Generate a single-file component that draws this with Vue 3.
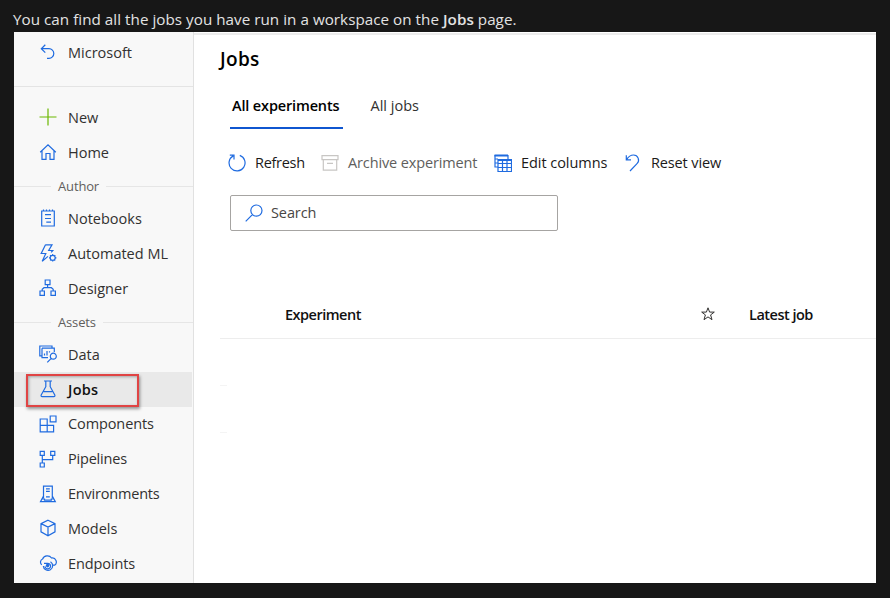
<script setup>
const main = [
  { label: 'New', icon: 'plus' },
  { label: 'Home', icon: 'home' },
]
const author = [
  { label: 'Notebooks', icon: 'notebook' },
  { label: 'Automated ML', icon: 'automl' },
  { label: 'Designer', icon: 'designer' },
]
const assets = [
  { label: 'Data', icon: 'data' },
  { label: 'Jobs', icon: 'flask', active: true },
  { label: 'Components', icon: 'components' },
  { label: 'Pipelines', icon: 'pipelines' },
  { label: 'Environments', icon: 'environments' },
  { label: 'Models', icon: 'cube' },
  { label: 'Endpoints', icon: 'endpoints' },
]
const groups = [
  { items: main },
  { title: 'Author', items: author },
  { title: 'Assets', items: assets },
]
const paths = {
  plus: 'M9 0.5V17.5M0.5 9H17.5',
  home: 'M1.2 9.3L9 1.8L16.8 9.3M3 8V16.3H7V10.5H11V16.3H15V8',
  notebook: 'M2.7 2H15.3V17H2.7ZM4.5 0.5V2.5M7.5 0.5V2.5M10.5 0.5V2.5M13.5 0.5V2.5M6 5.7H12M6 9.5H12M7.3 13.2H12',
  automl: 'M6.5 0.8H13L9.7 6.5H13.8L12.2 8.4M6.5 0.8L2.2 9.5H6.8L3.2 17.2L9 12.4M16.2 13.8A2.5 2.5 0 1 1 11.2 13.8A2.5 2.5 0 1 1 16.2 13.8M13.7 10.1V11.3M13.7 16.3V17.5M10 13.8H11.2M16.2 13.8H17.4M11.1 11.2L11.9 12M16.3 11.2L15.5 12M11.1 16.4L11.9 15.6M16.3 16.4L15.5 15.6',
  designer: 'M6.2 1H11V5.6H6.2ZM1 12H5.4V16.3H1ZM12 12H16.4V16.3H12ZM8.6 5.6V8.7M3.2 12V10.2L5 8.7H12.4L14.2 10.2V12',
  data: 'M3 10.8H0.8V1H13V3M3 3.2H15.3V7M3 3.2V12.7H9M5.5 10.5V8.5M8 10.5V6M10.5 7.5V6.3M17.3 11.2A3 3 0 1 1 11.3 11.2A3 3 0 1 1 17.3 11.2M12.2 13.4L8.3 17.4',
  flask: 'M5 1H13M6.8 1V6.7L2.2 15Q1.7 16.7 3.2 16.7H14.8Q16.3 16.7 15.8 15L11.2 6.7V1M4.7 11.7H13.3',
  components: 'M1.2 4H8.2V16.8H1.2ZM1.2 10.3H14.6V16.8H8.2V10.3M11.2 1H17V6.8H11.2Z',
  pipelines: 'M1.2 1.3H5.3V5.4H1.2ZM11.7 1.3H15.8V5.4H11.7ZM1.2 13H5.3V17H1.2ZM3.3 5.4V13M3.3 9.6H13.7V5.4',
  environments: 'M4.5 13.2V1.2H13.3V13.2M4.5 11L1.5 16.6H16.3L13.3 11M3 14H5.5V15.2H12.3V14H14.8M7 3.8H10.8M7 6.3H10.8M7 11.9H10.8',
  cube: 'M9 1.2L16 4.6V12.8L9 16.8L2 12.8V4.6ZM2 4.6L9 8L16 4.6M9 8V16.8',
  endpoints: 'M2.8 10.8A3.4 3.4 0 0 1 3.6 5A5.2 5.2 0 0 1 12.6 4A4 4 0 0 1 15.6 11.2H13.5M5 9.3H8.5A2.8 2.8 0 1 1 6 12.2M4.3 12A4.7 4.7 0 1 0 11.5 7.7',
}
</script>

<template>
  <div class="page">
    <p class="intro">You can find all the jobs you have run in a workspace on the <b>Jobs</b> page.</p>
    <div class="shot">
      <nav class="side">
        <div class="back">
          <svg class="ico" viewBox="0 0 18 18"><path d="M6.3 1.8L2.3 5.7L6.3 9.7M2.3 5.7H10A4.8 4.8 0 0 1 10 15.3H8" /></svg>
          <span>Microsoft</span>
        </div>
        <div v-for="(g, i) in groups" :key="i" class="group">
          <div v-if="g.title" class="title"><span>{{ g.title }}</span></div>
          <div v-for="it in g.items" :key="it.label" class="item" :class="{ active: it.active }">
            <svg class="ico" :class="it.icon" viewBox="0 0 18 18">
              <path :d="paths[it.icon]" />
              <circle v-if="it.icon === 'endpoints'" class="dot" cx="8.6" cy="11.6" r="1.8" />
            </svg>
            <span :class="it.icon + '-label'">{{ it.label }}</span>
            <i v-if="it.active" class="mark"></i>
          </div>
        </div>
      </nav>
      <main class="main">
        <h1>Jobs</h1>
        <div class="tabs">
          <div class="tab on">All experiments</div>
          <div class="tab">All jobs</div>
        </div>
        <div class="tools">
          <div class="tool refresh">
            <svg class="ico" viewBox="0 0 18 18"><path d="M11.8 1.4A8 8 0 1 1 5.2 1.9M1.8 1.2H6V5.4" /></svg>
            <span>Refresh</span>
          </div>
          <div class="tool archive">
            <svg class="ico" viewBox="0 0 18 18"><path d="M1 1.7H17V5.6H1ZM2.3 5.6V16.2H15.7V5.6M6 9.3H12" /></svg>
            <span>Archive experiment</span>
          </div>
          <div class="tool columns">
            <svg class="ico" viewBox="0 0 18 18"><path class="thick" d="M0.5 1.5H14M4 6H17.5" /><path d="M1 1V13.5M14 1V5M1 5H4M1 9H4M1 13H3.5M4 5.5H17.5V17.5H4ZM4 9.5H17.5M4 13.5H17.5M8.5 6V17.5M13 6V17.5" /></svg>
            <span>Edit columns</span>
          </div>
          <div class="tool reset">
            <svg class="ico" viewBox="0 0 18 18"><path d="M2.3 1.2V5.8H7M2.5 5.6Q5.5 1 9.5 1A5 5 0 0 1 13 9.6L6 17" /></svg>
            <span>Reset view</span>
          </div>
        </div>
        <div class="search">
          <svg class="ico" viewBox="0 0 18 18"><path d="M17 6.6A5.6 5.6 0 1 1 5.8 6.6A5.6 5.6 0 1 1 17 6.6M7.4 10.6L0.7 17.3" /></svg>
          <span>Search</span>
        </div>
        <div class="thead">
          <span class="exp">Experiment</span>
          <svg class="star" viewBox="0 0 14 14"><path d="M7 0.8L8.6 5.1H13.3L9.6 7.9L11 12.7L7 9.9L3 12.7L4.4 7.9L0.7 5.1H5.4Z" /></svg>
          <span class="latest">Latest job</span>
        </div>
        <div class="row"></div>
        <div class="row"></div>
      </main>
    </div>
  </div>
</template>

<style>
body { background: #171717; }
</style>
<style scoped>
.page { height: 598px; overflow: hidden; background: #171717; font-family: "Open Sans", "Noto Sans", sans-serif; font-size: 14.5px; box-sizing: border-box; padding: 8px 14px 0; }
.intro { margin: 0 0 0 -1px; height: 24px; line-height: 23px; color: #e3e3e3; font-size: 15.2px; letter-spacing: 0.04px; white-space: nowrap; }
.intro b { font-weight: 600; }
.shot { display: flex; width: 862px; height: 551px; background: #fff; overflow: hidden; }
.side { width: 179px; flex: none; background: #f8f8f8; border-right: 1px solid #e1e1e1; color: #323130; }
.ico { width: 18px; height: 18px; flex: none; fill: none; stroke: #1f6be0; stroke-width: 1.2; }
.back { height: 55px; box-sizing: border-box; border-bottom: 1px solid #e4e4e4; padding: 0 0 14px 25px; display: flex; align-items: center; gap: 11px; margin-bottom: 13px; }
.item { position: relative; height: 34.8px; display: flex; align-items: center; gap: 11px; padding-left: 25px; white-space: nowrap; }
.item.active { background: #e9e9e9; color: #111; font-weight: 600; margin-right: 1px; }
.plus { stroke: #6bb700; }
.dot { fill: #1f6be0; stroke: none; }
.flask-label { letter-spacing: 0.3px; }
.components-label, .endpoints-label { letter-spacing: -0.1px; }
.environments-label, .pipelines-label { letter-spacing: -0.2px; }
.title { display: flex; align-items: center; box-sizing: border-box; height: 31.5px; padding-top: 2px; gap: 7px; font-size: 13px; letter-spacing: -0.15px; color: #605e5c; }
.title::before { content: ""; width: 37px; height: 1px; background: #e6e6e6; }
.title::after { content: ""; flex: 1; height: 1px; background: #e6e6e6; }
.mark { position: absolute; left: 12px; top: 2px; width: 109px; height: 29px; border: 2px solid #e04444; box-shadow: 1px 2px 3px rgba(0, 0, 0, .4), inset 1px 1px 3px rgba(0, 0, 0, .3); }
.main { flex: 1; border-top: 1px solid #fff; box-shadow: inset 0 3px 0 -1px #ececec; padding-left: 26px; color: #1b1a19; }
h1 { margin: 13px 0 0; font-size: 19px; line-height: 26px; font-weight: 600; color: #000; letter-spacing: 0.3px; }
.tabs { display: flex; gap: 25px; margin: 14px 0 0 9.5px; }
.tab { height: 42.5px; line-height: 40px; box-sizing: border-box; padding: 0 3px; color: #323130; border-bottom: 2px solid transparent; white-space: nowrap; }
.tab.on { width: 113px; padding: 0 0 0 2.5px; font-weight: 600; color: #000; border-color: #0f56d0; letter-spacing: -0.15px; }
.tools { display: flex; height: 36px; margin: 16px 0 0 8px; align-items: center; letter-spacing: -0.13px; }
.tool { display: flex; align-items: center; white-space: nowrap; gap: 9px; }
.refresh { width: 93px; letter-spacing: -0.3px; }
.archive { width: 173px; color: #605e5c; }
.archive .ico { stroke: #c8c6c4; }
.columns { width: 130px; letter-spacing: -0.05px; }
.thick { stroke-width: 2; }
.search { display: flex; align-items: center; gap: 8px; box-sizing: border-box; width: 328px; height: 36px; border: 1px solid #a6a4a2; border-radius: 2px; margin: 14px 0 0 10px; padding-left: 14px; color: #484644; letter-spacing: -0.1px; }
.thead { display: flex; align-items: center; height: 48px; margin-top: 59.5px; border-bottom: 1px solid #ededed; font-weight: 600; padding-left: 65px; color: #111; letter-spacing: -0.5px; }
.exp { width: 416px; }
.star { width: 14px; height: 14px; fill: none; stroke: #323130; stroke-width: 1; }
.latest { margin-left: 34px; }
.row { width: 7px; height: 46px; border-bottom: 1px solid #f4f4f4; }
</style>
